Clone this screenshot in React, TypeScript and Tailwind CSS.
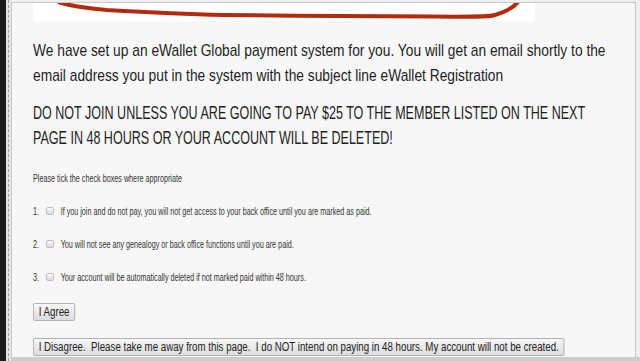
import React from 'react';

const sans = { fontFamily: '"Liberation Sans", Arial, sans-serif' };

const items = [
  'If you join and do not pay, you will not get access to your back office until you are marked as paid.',
  'You will not see any genealogy or back office functions until you are paid.',
  'Your account will be automatically deleted if not marked paid within 48 hours.',
];

const btn =
  'h-[18px] px-[6px] text-[12px] leading-[16px] text-[#222] border border-[#a9a9a9] rounded-[2px] bg-gradient-to-b from-[#f7f7f7] to-[#dddddd] whitespace-pre';

export default function App() {
  return (
    <div className="w-[640px] h-[361px] overflow-hidden flex bg-[#efefef]" style={sans}>
      <div className="w-[6px] shrink-0 bg-[#1b1b1b]" />
      <div className="w-[5px] shrink-0 bg-[#e4e4e4] flex justify-center">
        <div className="w-0 border-l border-dashed border-[#a0a0a0]" />
      </div>
      <div className="flex-1 min-w-0 flex flex-col">
        <div className="flex-1 mt-[2px] mr-[4px] bg-[#f7f7f7] border-t border-l border-r border-[#c8c8c8] pl-[21px] text-[#1e1e1e] overflow-hidden">
          <svg width="502" height="18" viewBox="0 0 502 18" className="block bg-white">
            <path
              d="M25 -1 C 38 3, 50 5, 74 7 C 110 9, 150 11, 190 12 C 260 13, 340 13, 400 13.5 C 440 14, 455 14, 462 12 C 472 9, 480 5, 485 -1"
              fill="none"
              stroke="#b42a0e"
              strokeWidth="4"
            />
          </svg>
          <p className="mt-[17px] text-[17px] leading-[25px] whitespace-nowrap origin-left scale-x-[0.81]">
            We have set up an eWallet Global payment system for you. You will get an email shortly to the
            <br />
            email address you put in the system with the subject line eWallet Registration
          </p>
          <p className="mt-[12px] text-[19px] leading-[25px] whitespace-nowrap origin-left scale-x-[0.66]">
            DO NOT JOIN UNLESS YOU ARE GOING TO PAY $25 TO THE MEMBER LISTED ON THE NEXT
            <br />
            PAGE IN 48 HOURS OR YOUR ACCOUNT WILL BE DELETED!
          </p>
          <div className="text-[11px] leading-[14px] text-[#333] origin-left scale-x-[0.655] whitespace-nowrap">
            <p className="mt-[21px]">Please tick the check boxes where appropriate</p>
            <div className="mt-[19px] flex flex-col gap-[19px]">
              {items.map((t, i) => (
                <div key={i} className="flex items-center">
                  <span>{i + 1}.</span>
                  <span className="ml-[11px] w-[12px] h-[8px] rounded-[2px] border border-[#b0b0b0] bg-gradient-to-b from-[#fafafa] to-[#dadada]" />
                  <span className="ml-[10px]">{t}</span>
                </div>
              ))}
            </div>
          </div>
          <div className="mt-[19px] flex flex-col items-start gap-[17px] origin-left scale-x-[0.81]">
            <button className={btn}>I Agree</button>
            <button className={btn}>I Disagree.  Please take me away from this page.  I do NOT intend on paying in 48 hours. My account will not be created.</button>
          </div>
        </div>
        <div className="h-[4px] bg-[#cdcdcd]" />
      </div>
    </div>
  );
}
